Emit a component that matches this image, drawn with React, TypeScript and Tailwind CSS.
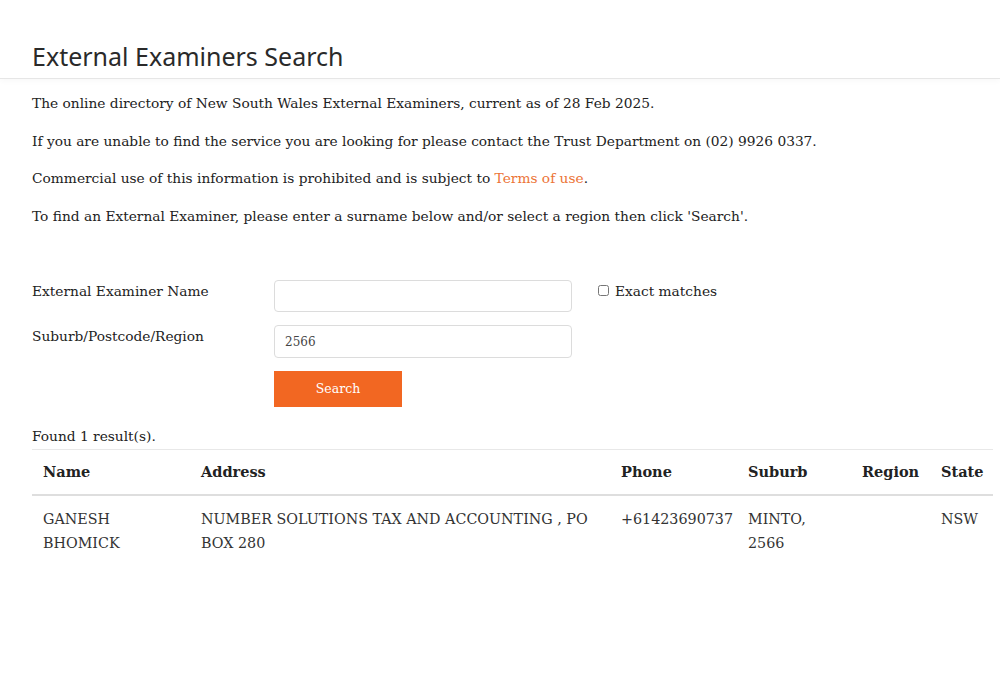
import { useState } from 'react';

interface Examiner {
    name: string;
    address: string;
    phone: string;
    suburb: string;
    region: string;
    state: string;
}

const results: Examiner[] = [
    {
        name: 'GANESH BHOMICK',
        address: 'NUMBER SOLUTIONS TAX AND ACCOUNTING , PO BOX 280',
        phone: '+61423690737',
        suburb: 'MINTO, 2566',
        region: '',
        state: 'NSW',
    },
];

const serif = "font-['DejaVu_Serif','Liberation_Serif',serif]";

export default function App() {
    const [name, setName] = useState('');
    const [suburb, setSuburb] = useState('2566');
    const [exact, setExact] = useState(false);

    return (
        <div className="min-h-[700px] bg-white text-[#222]">
            {/* Header */}
            <div className="border-b border-[#e6e6e6] pt-[40px] pb-[6px] px-[32px] shadow-[0_2px_6px_rgba(0,0,0,0.03)]">
                <h1 className="font-['Noto_Sans','Open_Sans',sans-serif] text-[25px] leading-[32px] text-[#2a2a2a]">
                    External Examiners Search
                </h1>
            </div>

            <div className={`${serif} px-[32px] pt-[13px] text-[13.75px] leading-[22.5px]`}>
                <p className="mb-[15px]">
                    The online directory of New South Wales External Examiners, current as of 28 Feb 2025.
                </p>
                <p className="mb-[15px]">
                    If you are unable to find the service you are looking for please contact the Trust Department on (02) 9926 0337.
                </p>
                <p className="mb-[15px]">
                    Commercial use of this information is prohibited and is subject to{' '}
                    <a href="#" className="text-[#ec7436]">Terms of use</a>.
                </p>
                <p className="mb-[15px]">
                    To find an External Examiner, please enter a surname below and/or select a region then click 'Search'.
                </p>

                {/* Form */}
                <div className="mt-[53px] flex flex-col gap-[13px]">
                    <div className="flex items-start">
                        <label className="w-[242px] leading-[22px]">External Examiner Name</label>
                        <input
                            value={name}
                            onChange={(e) => setName(e.target.value)}
                            className="w-[298px] h-[32px] rounded-[4px] border border-[#dcdcdc] px-[10px] text-[13px] outline-none"
                        />
                        <label className="ml-[26px] flex items-center gap-[6px] leading-[22px]">
                            <input
                                type="checkbox"
                                checked={exact}
                                onChange={(e) => setExact(e.target.checked)}
                                className="w-[11px] h-[11px] -mt-[2px]"
                            />
                            Exact matches
                        </label>
                    </div>
                    <div className="flex items-start">
                        <label className="w-[242px] leading-[22px]">Suburb/Postcode/Region</label>
                        <input
                            value={suburb}
                            onChange={(e) => setSuburb(e.target.value)}
                            className="w-[298px] h-[33px] rounded-[4px] border border-[#dcdcdc] px-[10px] text-[12px] text-[#444] outline-none"
                        />
                    </div>
                    <div className="flex">
                        <div className="w-[242px]"></div>
                        <button className="w-[128px] h-[36px] bg-[#f26722] text-white text-[12.5px]">
                            Search
                        </button>
                    </div>
                </div>

                {/* Results */}
                <p className="mt-[18px] mb-[2px] leading-[22px]">Found {results.length} result(s).</p>
                <table className="w-[961px] table-fixed border-collapse">
                    <colgroup>
                        <col className="w-[158px]" />
                        <col className="w-[420px]" />
                        <col className="w-[127px]" />
                        <col className="w-[114px]" />
                        <col className="w-[79px]" />
                        <col className="w-[63px]" />
                    </colgroup>
                    <thead>
                        <tr className="border-t border-[#e8e8e8] border-b-2 border-b-[#dedede] text-[14.5px]">
                            <th className="text-left font-bold px-[11px] h-[45px]">Name</th>
                            <th className="text-left font-bold px-[11px]">Address</th>
                            <th className="text-left font-bold px-[11px]">Phone</th>
                            <th className="text-left font-bold px-[11px]">Suburb</th>
                            <th className="text-left font-bold px-[11px]">Region</th>
                            <th className="text-left font-bold px-[11px]">State</th>
                        </tr>
                    </thead>
                    <tbody>
                        {results.map((r) => (
                            <tr key={r.phone} className="align-top text-[14.3px] leading-[24px] text-[#333]">
                                <td className="px-[11px] pt-[11px] pb-[8px]">{r.name}</td>
                                <td className="px-[11px] pt-[11px] pb-[8px]">{r.address}</td>
                                <td className="px-[11px] pt-[11px] pb-[8px]">{r.phone}</td>
                                <td className="px-[11px] pt-[11px] pb-[8px]">{r.suburb}</td>
                                <td className="px-[11px] pt-[11px] pb-[8px]">{r.region}</td>
                                <td className="px-[11px] pt-[11px] pb-[8px]">{r.state}</td>
                            </tr>
                        ))}
                    </tbody>
                </table>
            </div>
        </div>
    );
}
